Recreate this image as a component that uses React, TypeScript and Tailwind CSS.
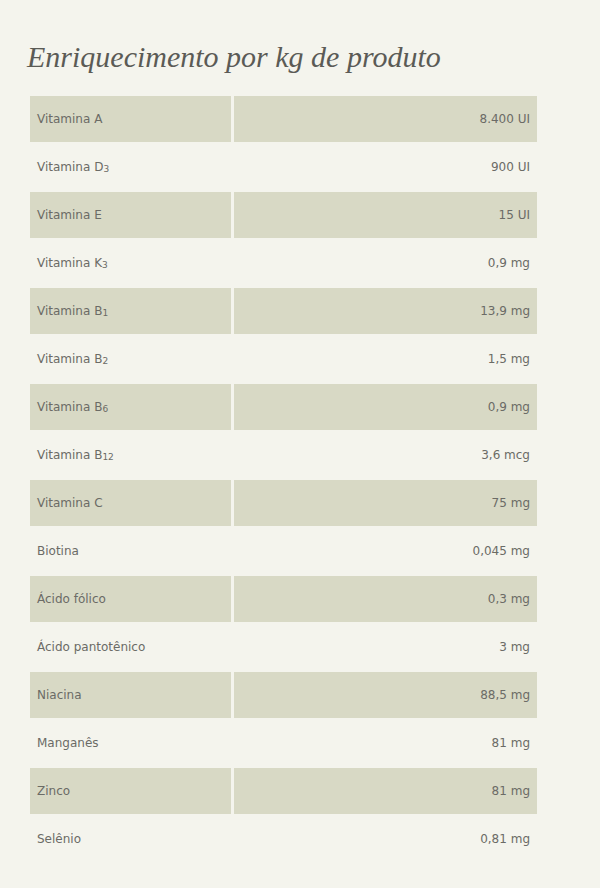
import React from "react"

type Linha = { nome: React.ReactNode; valor: string }

function Sub({ children }: { children: React.ReactNode }) {
  return <span className="relative top-[1px] text-[9px]">{children}</span>
}

const linhas: Linha[] = [
  { nome: "Vitamina A", valor: "8.400 UI" },
  { nome: <>Vitamina D<Sub>3</Sub></>, valor: "900 UI" },
  { nome: "Vitamina E", valor: "15 UI" },
  { nome: <>Vitamina K<Sub>3</Sub></>, valor: "0,9 mg" },
  { nome: <>Vitamina B<Sub>1</Sub></>, valor: "13,9 mg" },
  { nome: <>Vitamina B<Sub>2</Sub></>, valor: "1,5 mg" },
  { nome: <>Vitamina B<Sub>6</Sub></>, valor: "0,9 mg" },
  { nome: <>Vitamina B<Sub>12</Sub></>, valor: "3,6 mcg" },
  { nome: "Vitamina C", valor: "75 mg" },
  { nome: "Biotina", valor: "0,045 mg" },
  { nome: "Ácido fólico", valor: "0,3 mg" },
  { nome: "Ácido pantotênico", valor: "3 mg" },
  { nome: "Niacina", valor: "88,5 mg" },
  { nome: "Manganês", valor: "81 mg" },
  { nome: "Zinco", valor: "81 mg" },
  { nome: "Selênio", valor: "0,81 mg" },
]

export default function App() {
  return (
    <div className="min-h-[888px] w-[600px] bg-[#f4f4ed] pl-[30px] pr-[63px] pt-[38px]">
      <h1
        className="mb-[20px] -ml-[3px] text-[30px] italic leading-[38px] text-[#5b5b56]"
        style={{ fontFamily: '"Liberation Serif", serif' }}
      >
        Enriquecimento por kg de produto
      </h1>
      <div
        className="flex flex-col gap-[2px] text-[12px] text-[#6b6b66]"
        style={{ fontFamily: '"DejaVu Sans", sans-serif' }}
      >
        {linhas.map((l, i) => {
          const sombra = i % 2 === 0 ? "bg-[#d8d9c5]" : ""
          return (
            <div key={i} className="flex h-[46px] gap-[3px]">
              <div className={`flex w-[201px] items-center pb-[1px] pl-[7px] ${sombra}`}>
                <span>{l.nome}</span>
              </div>
              <div className={`flex flex-1 items-center justify-end pb-[1px] pr-[7px] ${sombra}`}>
                {l.valor}
              </div>
            </div>
          )
        })}
      </div>
    </div>
  )
}
